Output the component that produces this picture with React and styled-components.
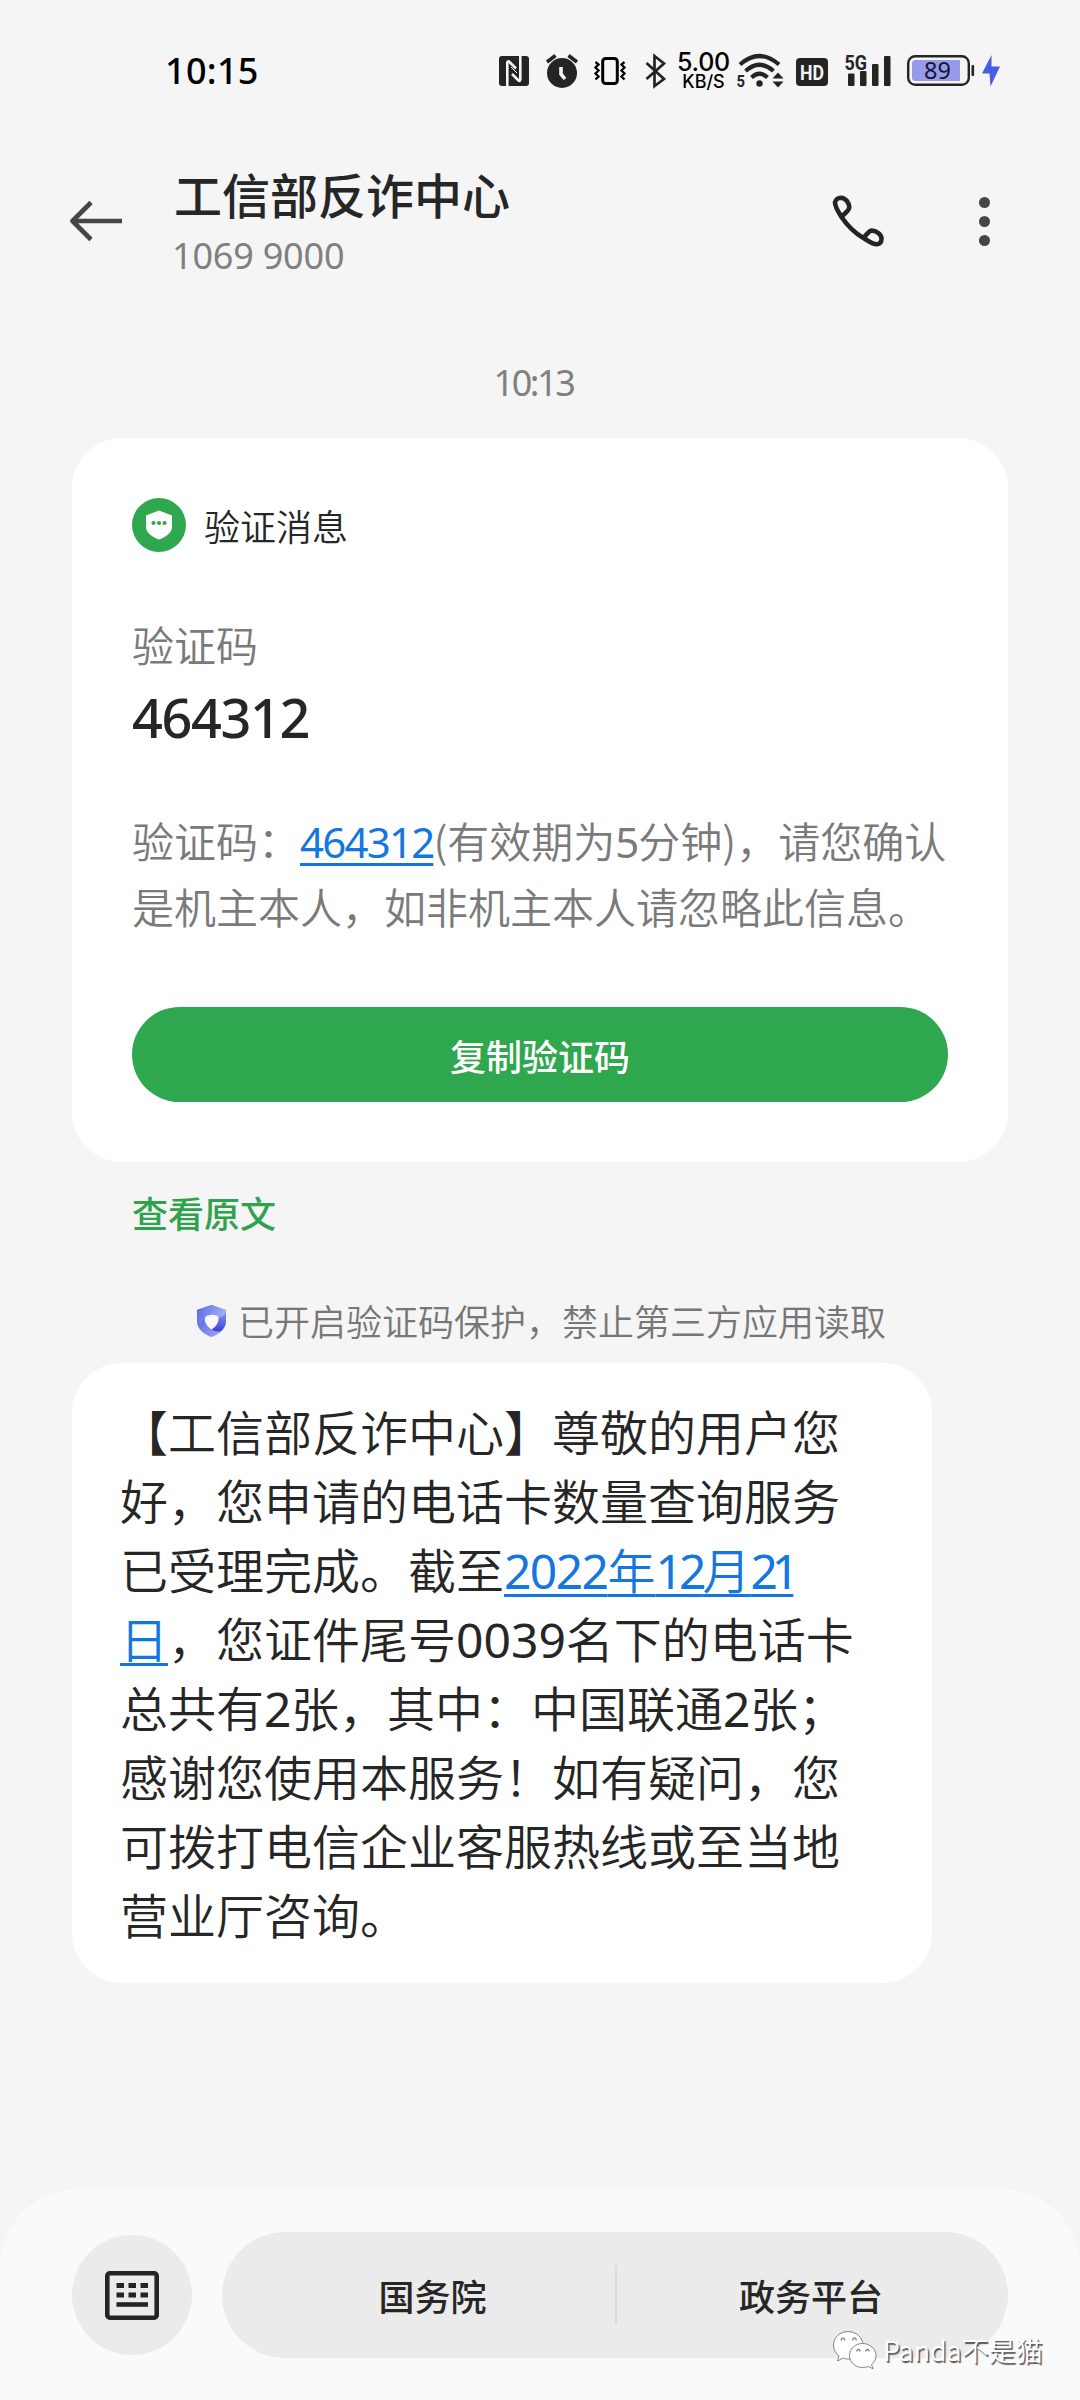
import React from 'react';
import styled, { createGlobalStyle } from 'styled-components';

const Global = createGlobalStyle`
  * { box-sizing: border-box; }
  body {
    margin: 0;
    background: #f5f5f5;
    color: #262626;
    font-family: "Noto Sans CJK SC", "Noto Sans", sans-serif;
  }
`;

const latin = '"Noto Sans", "Noto Sans CJK SC", sans-serif';

const Screen = styled.div`
  width: 1080px;
  height: 2400px;
  background: #f5f5f5;
  display: flex;
  flex-direction: column;
  overflow: hidden;
`;

const StatusBar = styled.header`
  height: 140px;
  padding: 53px 70px 0 165px;
  display: flex;
  align-items: flex-start;
`;

const Clock = styled.div`
  flex: none;
  width: 334px;
  height: 36px;
  font-family: ${latin};
  font-size: 36px;
  line-height: 35px;
  font-weight: 500;
  letter-spacing: 0.3px;
  color: #000;
`;

const StatusIcon = styled.svg`
  flex: none;
  display: block;
  overflow: visible;
  height: 36px;
  width: ${(p) => p.$w}px;
  margin-right: ${(p) => p.$gap || 0}px;
`;

const Speed = styled.div`
  flex: none;
  width: 55px;
  height: 38px;
  margin-right: 5px;
  display: flex;
  flex-direction: column;
  align-items: center;
  color: #000;
  font-family: Inter, sans-serif;
  font-weight: 500;
`;

const SpeedValue = styled.span`
  font-size: 25px;
  line-height: 19px;
  letter-spacing: -0.3px;
  white-space: nowrap;
`;

const SpeedUnit = styled.span`
  font-size: 18px;
  line-height: 20px;
`;

const TopBar = styled.div`
  height: 160px;
  padding: 24px 70px 0 70px;
  display: flex;
  align-items: flex-start;
`;

const BackArrow = styled.svg`
  width: 54px;
  height: 42px;
  margin: 36px 50px 0 0;
`;

const Contact = styled.div`
  width: 658px;
`;

const ContactName = styled.h1`
  margin: 0;
  font-size: 48px;
  line-height: 58px;
  font-weight: 500;
`;

const ContactNumber = styled.div`
  margin-left: -2px;
  font-family: ${latin};
  font-size: 36px;
  line-height: 68px;
  font-weight: 400;
  letter-spacing: -0.2px;
  color: #808080;
`;

const PhoneIcon = styled.svg`
  width: 54px;
  height: 54px;
  margin-top: 31px;
`;

const MoreDots = styled.div`
  width: 11px;
  margin: 33px 0 0 92.5px;
  display: flex;
  flex-direction: column;
  gap: 8px;
`;

const Dot = styled.i`
  width: 11px;
  height: 11px;
  flex: none;
  border-radius: 50%;
  background: #454545;
`;

const Thread = styled.main`
  flex: 1;
  padding: 56px 72px 0;
  display: flex;
  flex-direction: column;
  align-items: flex-start;
`;

const TimeStamp = styled.time`
  align-self: center;
  margin-left: -13px;
  height: 82px;
  font-family: ${latin};
  font-size: 36px;
  line-height: 54px;
  font-weight: 400;
  letter-spacing: -2.4px;
  color: #808080;
`;

const CodeCard = styled.section`
  width: 936px;
  height: 724px;
  padding: 60px;
  border-radius: 50px;
  background: #fff;
  display: flex;
  flex-direction: column;
`;

const CardHeading = styled.div`
  height: 54px;
  display: flex;
  align-items: center;
  gap: 18px;
  font-size: 36px;
  line-height: 54px;
  font-weight: 350;
`;

const CodeLabel = styled.div`
  margin-top: 64px;
  font-size: 42px;
  line-height: 56px;
  font-weight: 350;
  color: #7a7a7a;
`;

const Code = styled.div`
  margin-top: 12px;
  font-family: ${latin};
  font-size: 54px;
  line-height: 66px;
  font-weight: 500;
  letter-spacing: -1.4px;
`;

const CodeBody = styled.p`
  margin: 57px 0 0;
  font-size: 42px;
  line-height: 66px;
  font-weight: 350;
  color: #7a7a7a;
`;

const Line = styled.span`
  display: block;
  white-space: nowrap;
`;

const Digits = styled.span`
  font-family: ${latin};
  font-weight: 400;
  line-height: 1;
  letter-spacing: ${(p) => p.$ls || 0}px;
`;

const Link = styled.a`
  color: #1477e0;
  text-decoration: underline;
  text-decoration-thickness: 3px;
  text-underline-offset: 5px;
  text-decoration-skip-ink: none;
`;

const CopyButton = styled.button`
  width: 816px;
  height: 96px;
  margin-top: 68px;
  padding: 0;
  border: 0;
  border-radius: 48px;
  background: #2fa74e;
  color: #fff;
  font: inherit;
  font-size: 36px;
  font-weight: 500;
`;

const SourceLink = styled.a`
  margin: 23px 0 0 60px;
  font-size: 36px;
  line-height: 54px;
  font-weight: 500;
  color: #2fa24e;
`;

const Notice = styled.div`
  margin: 55px 0 0 124px;
  height: 54px;
  display: flex;
  align-items: center;
  gap: 10px;
  font-size: 36px;
  line-height: 54px;
  font-weight: 350;
  color: #777;
  white-space: nowrap;
`;

const NoticeText = styled.span`
  padding-bottom: 2px;
`;

const Bubble = styled.section`
  width: 860px;
  height: 620px;
  margin-top: 15px;
  padding: 33px 48px;
  border-radius: 50px;
  background: #fff;
  font-size: 48px;
  line-height: 69px;
  font-weight: 350;
`;

const Dock = styled.footer`
  height: 211px;
  padding: 43px 72px 0;
  border-radius: 78px 78px 0 0;
  background: #fafafa;
  display: flex;
  gap: 30px;
`;

const KeyboardButton = styled.button`
  width: 120px;
  height: 120px;
  margin-top: 3px;
  padding: 0;
  border: 0;
  border-radius: 50%;
  background: #ebebeb;
  display: flex;
  align-items: center;
  justify-content: center;
`;

const Menu = styled.nav`
  position: relative;
  width: 786px;
  height: 126px;
  border-radius: 63px;
  background: #ebebeb;
  display: flex;
  align-items: center;
`;

const MenuItem = styled.span`
  width: ${(p) => p.$w}px;
  padding-left: ${(p) => p.$left || 0}px;
  padding-right: ${(p) => p.$right || 0}px;
  text-align: center;
  font-size: 36px;
  font-weight: 500;
  line-height: 54px;
`;

const MenuDivider = styled.i`
  width: 2px;
  height: 60px;
  background: #dcdcdc;
`;

const Watermark = styled.div`
  position: absolute;
  left: 610px;
  top: 96px;
  display: flex;
  align-items: center;
  gap: 6px;
  color: #fff;
  font-size: 27px;
  font-weight: 350;
  line-height: 44px;
  white-space: nowrap;
  text-shadow: 1.5px 1.5px 1px #555;
`;

const ink = '#242424';

function StatusIcons() {
  return (
    <>
      <StatusIcon $w={30} $gap={17} viewBox="0 0 30 36">
        <rect x="0" y="3" width="30" height="30" rx="3" fill={ink} />
        <path d="M8.300 33V9.500Q8.500 8 10 8.500L17 15.500M21.300 3V26.500Q21 28.500 19.500 27.500L13 21" fill="none" stroke="#f5f5f5" strokeWidth="2.600" />
        <path d="M12 14L18 20" stroke="#f5f5f5" strokeWidth="1" />
      </StatusIcon>
      <StatusIcon $w={32} $gap={17} viewBox="0 0 32 36">
        <circle cx="16" cy="20" r="15" fill={ink} />
        <path d="M1 9L9.500 2.500M31 9L22.500 2.500" stroke={ink} strokeWidth="3.500" />
        <path d="M15 14V21L19 26" fill="none" stroke="#f5f5f5" strokeWidth="3.600" />
      </StatusIcon>
      <StatusIcon $w={32} $gap={18} viewBox="0 0 32 36">
        <rect x="7.700" y="5.500" width="14.600" height="25" rx="3" fill="none" stroke="#000" strokeWidth="3" />
        <path d="M0.500 9l3 2.500l-3 3l3 3l-3 3l3 3l-3 3M29.500 9l-3 2.500l3 3l-3 3l3 3l-3 3l3 3" fill="none" stroke="#000" strokeWidth="2.300" />
      </StatusIcon>
      <StatusIcon $w={22} $gap={9} viewBox="0 0 22 36">
        <path d="M1.500 10L19 26L9.500 33V3L19 10.500L1.500 26" fill="none" stroke={ink} strokeWidth="2.700" />
      </StatusIcon>
      <Speed>
        <SpeedValue>5.00</SpeedValue>
        <SpeedUnit>KB/S</SpeedUnit>
      </Speed>
      <StatusIcon $w={50} $gap={10} viewBox="0 0 50 36">
        <path d="M4 11.500Q23.500 -5.500 43 11.500M9.500 18Q23.500 5.500 37.500 18M15.500 24.500Q23.500 17 31.500 24.500" fill="none" stroke={ink} strokeWidth="4.200" />
        <circle cx="23.500" cy="30.500" r="3.200" fill={ink} />
        <text x="0.500" y="34" fontFamily="Roboto, sans-serif" fontWeight="700" fontSize="17" textLength="8.500" lengthAdjust="spacingAndGlyphs" fill={ink}>5</text>
        <path d="M42 19.500l5.500 6h-11zM42 34.500l5.500 -6h-11z" fill={ink} />
      </StatusIcon>
      <StatusIcon $w={32} $gap={16} viewBox="0 0 32 36">
        <rect x="0" y="5" width="32" height="28" rx="4" fill={ink} />
        <text x="4" y="26.500" fontFamily="Roboto, sans-serif" fontWeight="700" fontSize="21" textLength="24" lengthAdjust="spacingAndGlyphs" fill="#f5f5f5">HD</text>
      </StatusIcon>
      <StatusIcon $w={48} $gap={15} viewBox="0 0 48 36">
        <text x="0.500" y="16.500" fontFamily="Roboto, sans-serif" fontWeight="700" fontSize="20.500" textLength="22.500" lengthAdjust="spacingAndGlyphs" fill={ink}>5G</text>
        <rect x="4" y="20.500" width="6.500" height="12.500" rx="1" fill={ink} />
        <rect x="16" y="18" width="6.500" height="15" rx="1" fill={ink} />
        <rect x="28" y="11" width="6.500" height="22" rx="1" fill={ink} />
        <rect x="40" y="3" width="6.500" height="30" rx="1" fill={ink} />
      </StatusIcon>
      <StatusIcon $w={68} $gap={6} viewBox="0 0 68 36">
        <rect x="1.200" y="3.200" width="60.600" height="28.600" rx="7" fill="none" stroke={ink} strokeWidth="2.400" />
        <path d="M8.500 7H53V28H8.500Q5 28 5 24.500V10.500Q5 7 8.500 7Z" fill="#9799ea" />
        <rect x="64.500" y="12" width="2.600" height="11" rx="1" fill={ink} />
        <text x="30.500" y="26" textAnchor="middle" fontFamily="Noto Sans, sans-serif" fontSize="23.500" fill="#15152a">89</text>
      </StatusIcon>
      <StatusIcon $w={20} viewBox="0 0 20 36">
        <path d="M10.500 2L1 20.500H8.500L9.500 33.500L19 13.500H10.500Z" fill="#4a5be6" />
      </StatusIcon>
    </>
  );
}

export default function App() {
  return (
    <Screen>
      <Global />
      <StatusBar>
        <Clock>10:15</Clock>
        <StatusIcons />
      </StatusBar>

      <TopBar>
        <BackArrow viewBox="0 0 54 42" fill="none" stroke="#454545" strokeWidth="4.600">
          <path d="M52 21H3M21 2.500L2.500 21L21 39.500" strokeLinejoin="round" />
        </BackArrow>
        <Contact>
          <ContactName>工信部反诈中心</ContactName>
          <ContactNumber>1069 9000</ContactNumber>
        </Contact>
        <PhoneIcon viewBox="0 0 54 54" fill="none" stroke={ink} strokeWidth="4.600" strokeLinejoin="round" strokeLinecap="round">
          <path d="M9.500 22C5 15 3 11 3 7.500C3.500 4.500 6 2.700 9 2.700C14 3 17 8 17.300 12C17.300 16 12.500 18 9.500 22C15 30 22 37.500 31 42.700C38 47 41 49.300 45 49.300C48 49 49.500 47 49.500 43.500C49.300 39.500 45 36 40 35.500C36 35.500 35 40.500 31 42.700" />
        </PhoneIcon>
        <MoreDots>
          <Dot />
          <Dot />
          <Dot />
        </MoreDots>
      </TopBar>

      <Thread>
        <TimeStamp>10:13</TimeStamp>
        <CodeCard>
          <CardHeading>
            <svg width="54" height="54" viewBox="0 0 54 54">
              <circle cx="27" cy="27" r="27" fill="#2fa74e" />
              <path d="M27 12.500L40 17.500V29C40 35 33 39.500 27 41.500C21 39.500 14 35 14 29V17.500Z" fill="#fff" />
              <circle cx="21.500" cy="25" r="2.100" fill="#2fa74e" />
              <circle cx="27" cy="25" r="2.100" fill="#2fa74e" />
              <circle cx="32.500" cy="25" r="2.100" fill="#2fa74e" />
            </svg>
            <span>验证消息</span>
          </CardHeading>
          <CodeLabel>验证码</CodeLabel>
          <Code>464312</Code>
          <CodeBody>
            <Line>
              验证码：<Link><Digits $ls={-1.8}>464312</Digits></Link>(有效期为<Digits $ls={-1}>5</Digits>分钟)，请您确认
            </Line>
            <Line>是机主本人，如非机主本人请忽略此信息。</Line>
          </CodeBody>
          <CopyButton>复制验证码</CopyButton>
        </CodeCard>

        <SourceLink>查看原文</SourceLink>

        <Notice>
          <svg width="32" height="34" viewBox="0 0 32 34">
            <defs>
              <linearGradient id="armTop" x1="0" y1="0" x2="1" y2="0.300">
                <stop offset="0" stopColor="#5a68e6" />
                <stop offset="1" stopColor="#a3aff5" />
              </linearGradient>
              <linearGradient id="armRight" x1="0.500" y1="0" x2="0.300" y2="1">
                <stop offset="0" stopColor="#8792ef" />
                <stop offset="1" stopColor="#3340dc" />
              </linearGradient>
              <linearGradient id="armLeft" x1="0" y1="0" x2="1" y2="1">
                <stop offset="0" stopColor="#4452e0" />
                <stop offset="1" stopColor="#a7b0f5" />
              </linearGradient>
            </defs>
            <path d="M15.500 1L30 6V17C30 25 23 30.500 15.500 33C8 30.500 1 25 1 17V6Z" fill="url(#armLeft)" />
            <path d="M30 6V17C30 21 28 24.500 25 27.200C21 28 17 27 15 24.500C19 22 21.500 19 21.500 15C21.500 12 20 10 17 8Z" fill="url(#armRight)" />
            <path d="M15.500 1L30 6C30 10 27 13 21.500 14C20 12 17 11.500 13 12.500C8.500 13 5 16 4 21C2 18 1 16 1 12V6Z" fill="url(#armTop)" />
            <path d="M12 11.500C15 10.500 18 10.500 20.500 11.500C23 12.500 23 15.500 22 18C21 21 18.500 24 15.500 25.500C12.500 24 10 20.500 9 17.500C8.300 14.500 9 12.300 12 11.500Z" fill="#f8f8fd" />
          </svg>
          <NoticeText>已开启验证码保护，禁止第三方应用读取</NoticeText>
        </Notice>

        <Bubble>
          <Line>【工信部反诈中心】尊敬的用户您</Line>
          <Line>好，您申请的电话卡数量查询服务</Line>
          <Line>
            已受理完成。截至<Link><Digits $ls={-1.6}>2022</Digits>年<Digits $ls={-4}>12</Digits>月<Digits $ls={-6}>21</Digits></Link>
          </Line>
          <Line><Link>日</Link>，您证件尾号<Digits>0039</Digits>名下的电话卡</Line>
          <Line>总共有<Digits $ls={-0.5}>2</Digits>张，其中：中国联通<Digits $ls={-0.5}>2</Digits>张；</Line>
          <Line>感谢您使用本服务！如有疑问，您</Line>
          <Line>可拨打电信企业客服热线或至当地</Line>
          <Line>营业厅咨询。</Line>
        </Bubble>
      </Thread>

      <Dock>
        <KeyboardButton aria-label="键盘">
          <svg width="54" height="50" viewBox="0 0 54 50">
            <rect x="2.300" y="3.300" width="49.400" height="44.400" rx="2.500" fill="none" stroke={ink} strokeWidth="4.600" />
            <path d="M11.500 15.500H19M23.500 15.500H31M35.500 15.500H43M11.500 25H19M23.500 25H31M35.500 25H43" stroke={ink} strokeWidth="5" />
            <path d="M11.500 34.500H43" stroke={ink} strokeWidth="4.600" />
          </svg>
        </KeyboardButton>
        <Menu>
          <MenuItem $w={393} $left={28}>国务院</MenuItem>
          <MenuDivider />
          <MenuItem $w={391} $right={3}>政务平台</MenuItem>
          <Watermark>
            <svg width="45" height="40" viewBox="0 0 45 40" fill="#fff" stroke="#777" strokeWidth="0.900">
              <path d="M16 1.500C8 1.500 1.500 7.500 1.500 15C1.500 20 4 23.500 7 26L5.500 31L11 28C13 29 15 29 17 29C25 29 31 23 31 15.500C31 7.500 24 1.500 16 1.500Z" />
              <path d="M30.500 13.500C23 13.500 17.500 19 17.500 25.500C17.500 32 23 37.500 30.500 37.500C32.500 37.500 34.500 37 36.500 36.500L41 38.800L39.500 34.500C42.500 32 44 29 44 25.500C44 19 38 13.500 30.500 13.500Z" />
              <path d="M9.500 10.500a1.700 1.700 0 1 1 3 0M21 10.500a1.700 1.700 0 1 1 3 0M25 21.500a1.500 1.500 0 1 1 2.800 0M34 21.500a1.500 1.500 0 1 1 2.800 0" fill="none" strokeWidth="1.200" />
            </svg>
            <span>Panda不是猫</span>
          </Watermark>
        </Menu>
      </Dock>
    </Screen>
  );
}
